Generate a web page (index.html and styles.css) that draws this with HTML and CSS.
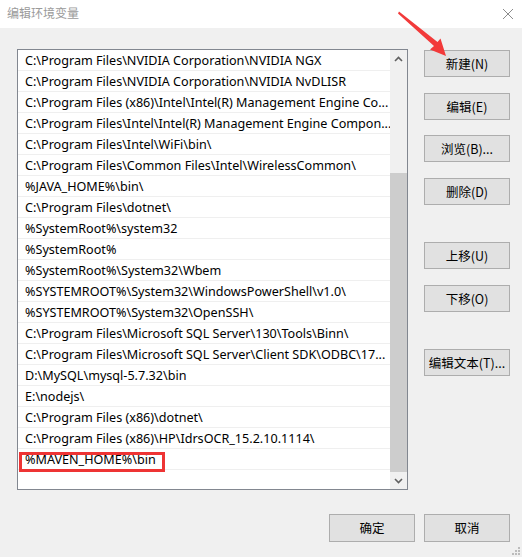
FILE: index.html
```html
<!DOCTYPE html>
<html lang="zh-CN">
<head>
<meta charset="utf-8">
<title>编辑环境变量</title>
<link rel="stylesheet" href="styles.css">
</head>
<body>
<div class="win">
  <div class="titlebar">
    <span class="title">编辑环境变量</span>
    <svg class="close" width="12" height="12" viewBox="0 0 12 12"><path d="M1 1 L11 11 M11 1 L1 11" stroke="#8c8c8c" stroke-width="1" fill="none"/></svg>
  </div>
  <div class="content">
    <div class="main">
      <div class="list">
        <div class="rows">
          <div class="row">C:\Program Files\NVIDIA Corporation\NVIDIA NGX</div>
          <div class="row">C:\Program Files\NVIDIA Corporation\NVIDIA NvDLISR</div>
          <div class="row">C:\Program Files (x86)\Intel\Intel(R) Management Engine Co...</div>
          <div class="row">C:\Program Files\Intel\Intel(R) Management Engine Compon...</div>
          <div class="row">C:\Program Files\Intel\WiFi\bin\</div>
          <div class="row">C:\Program Files\Common Files\Intel\WirelessCommon\</div>
          <div class="row">%JAVA_HOME%\bin\</div>
          <div class="row">C:\Program Files\dotnet\</div>
          <div class="row">%SystemRoot%\system32</div>
          <div class="row">%SystemRoot%</div>
          <div class="row">%SystemRoot%\System32\Wbem</div>
          <div class="row">%SYSTEMROOT%\System32\WindowsPowerShell\v1.0\</div>
          <div class="row">%SYSTEMROOT%\System32\OpenSSH\</div>
          <div class="row">C:\Program Files\Microsoft SQL Server\130\Tools\Binn\</div>
          <div class="row">C:\Program Files\Microsoft SQL Server\Client SDK\ODBC\17...</div>
          <div class="row">D:\MySQL\mysql-5.7.32\bin</div>
          <div class="row">E:\nodejs\</div>
          <div class="row">C:\Program Files (x86)\dotnet\</div>
          <div class="row">C:\Program Files (x86)\HP\IdrsOCR_15.2.10.1114\</div>
          <div class="row">%MAVEN_HOME%\bin</div>
          <div class="row"></div>
        </div>
        <div class="scrollbar">
          <div class="sb-btn">
            <svg width="9" height="6" viewBox="0 0 9 6"><path d="M1 5 L4.5 1.5 L8 5" stroke="#606060" stroke-width="1.6" fill="none"/></svg>
          </div>
          <div class="track"><div class="thumb"></div></div>
          <div class="sb-btn">
            <svg width="9" height="6" viewBox="0 0 9 6"><path d="M1 1 L4.5 4.5 L8 1" stroke="#606060" stroke-width="1.6" fill="none"/></svg>
          </div>
        </div>
      </div>
      <div class="side">
        <div class="group">
          <button class="btn">新建(N)</button>
          <button class="btn">编辑(E)</button>
          <button class="btn">浏览(B)...</button>
          <button class="btn">删除(D)</button>
        </div>
        <div class="group">
          <button class="btn">上移(U)</button>
          <button class="btn">下移(O)</button>
        </div>
        <div class="group">
          <button class="btn">编辑文本(T)...</button>
        </div>
      </div>
    </div>
    <div class="footer">
      <button class="btn btn-foot">确定</button>
      <button class="btn btn-foot">取消</button>
    </div>
  </div>
  <svg class="grip" width="9" height="9" viewBox="0 0 9 9">
    <rect x="7" y="1" width="2" height="2" fill="#bcbcbc"/>
    <rect x="4" y="4" width="2" height="2" fill="#bcbcbc"/>
    <rect x="7" y="4" width="2" height="2" fill="#bcbcbc"/>
    <rect x="1" y="7" width="2" height="2" fill="#bcbcbc"/>
    <rect x="4" y="7" width="2" height="2" fill="#bcbcbc"/>
    <rect x="7" y="7" width="2" height="2" fill="#bcbcbc"/>
  </svg>
  <div class="highlight"></div>
  <svg class="arrow" width="522" height="80" viewBox="0 0 522 80">
    <polygon points="399,11.5 437.5,42 440.5,38.5 446,56 430,49.5 434,46 398,13.5" fill="#f23a3a"/>
  </svg>
</div>
</body>
</html>
```

FILE: styles.css
```css
* { box-sizing: border-box; }
html, body { margin: 0; padding: 0; }
body {
  width: 522px;
  height: 557px;
  overflow: hidden;
  font-family: "Noto Sans", "Noto Sans CJK SC", sans-serif;
  font-size: 12px;
  color: #000;
}
.win {
  position: relative;
  width: 522px;
  height: 557px;
  background: #f0f0f0;
  display: flex;
  flex-direction: column;
}
.titlebar {
  height: 28px;
  background: #fff;
  display: flex;
  align-items: center;
  justify-content: space-between;
  padding: 0 8px 3px 7px;
}
.title {
  font-family: "Noto Sans CJK SC", sans-serif;
  font-size: 12px;
  color: #9a9a9a;
}
.close { margin-top: 2px; }
.content {
  flex: 1;
  display: flex;
  flex-direction: column;
}
.main {
  display: flex;
  padding: 21px 0 0 17px;
  gap: 16px;
}
.list {
  width: 391px;
  height: 441px;
  border: 1px solid #828790;
  background: #fff;
  display: flex;
  overflow: hidden;
}
.rows {
  flex: 1;
  display: flex;
  flex-direction: column;
  overflow: hidden;
}
.row {
  height: 21px;
  flex: none;
  border-bottom: 1px solid #efefef;
  padding-left: 7px;
  font-size: 12.6px;
  line-height: 22px;
  white-space: nowrap;
  overflow: hidden;
}
.scrollbar {
  width: 17px;
  background: #f0f0f0;
  display: flex;
  flex-direction: column;
}
.sb-btn {
  height: 17px;
  flex: none;
  display: flex;
  align-items: center;
  justify-content: center;
}
.track {
  flex: 1;
  display: flex;
  flex-direction: column;
  justify-content: flex-end;
}
.thumb {
  height: 299px;
  background: #cdcdcd;
}
.side {
  display: flex;
  flex-direction: column;
  gap: 37.5px;
  padding-top: 1px;
}
.group {
  display: flex;
  flex-direction: column;
  gap: 15.5px;
}
.btn {
  width: 86px;
  height: 27px;
  background: #e1e1e1;
  border: 1px solid #adadad;
  font-family: "Noto Sans CJK SC", sans-serif;
  font-size: 12.5px;
  color: #000;
  padding: 0;
  margin: 0;
  line-height: 25px;
  text-align: center;
}
.footer {
  display: flex;
  justify-content: flex-end;
  gap: 9px;
  padding: 24px 12px 0 0;
}
.btn-foot { height: 28px; line-height: 26px; }
.grip {
  position: absolute;
  right: 2px;
  bottom: 2px;
}
.highlight {
  position: absolute;
  left: 19px;
  top: 452px;
  width: 146px;
  height: 20px;
  border: 3px solid #ee3434;
}
.arrow {
  position: absolute;
  left: 0;
  top: 0;
  pointer-events: none;
}
```
